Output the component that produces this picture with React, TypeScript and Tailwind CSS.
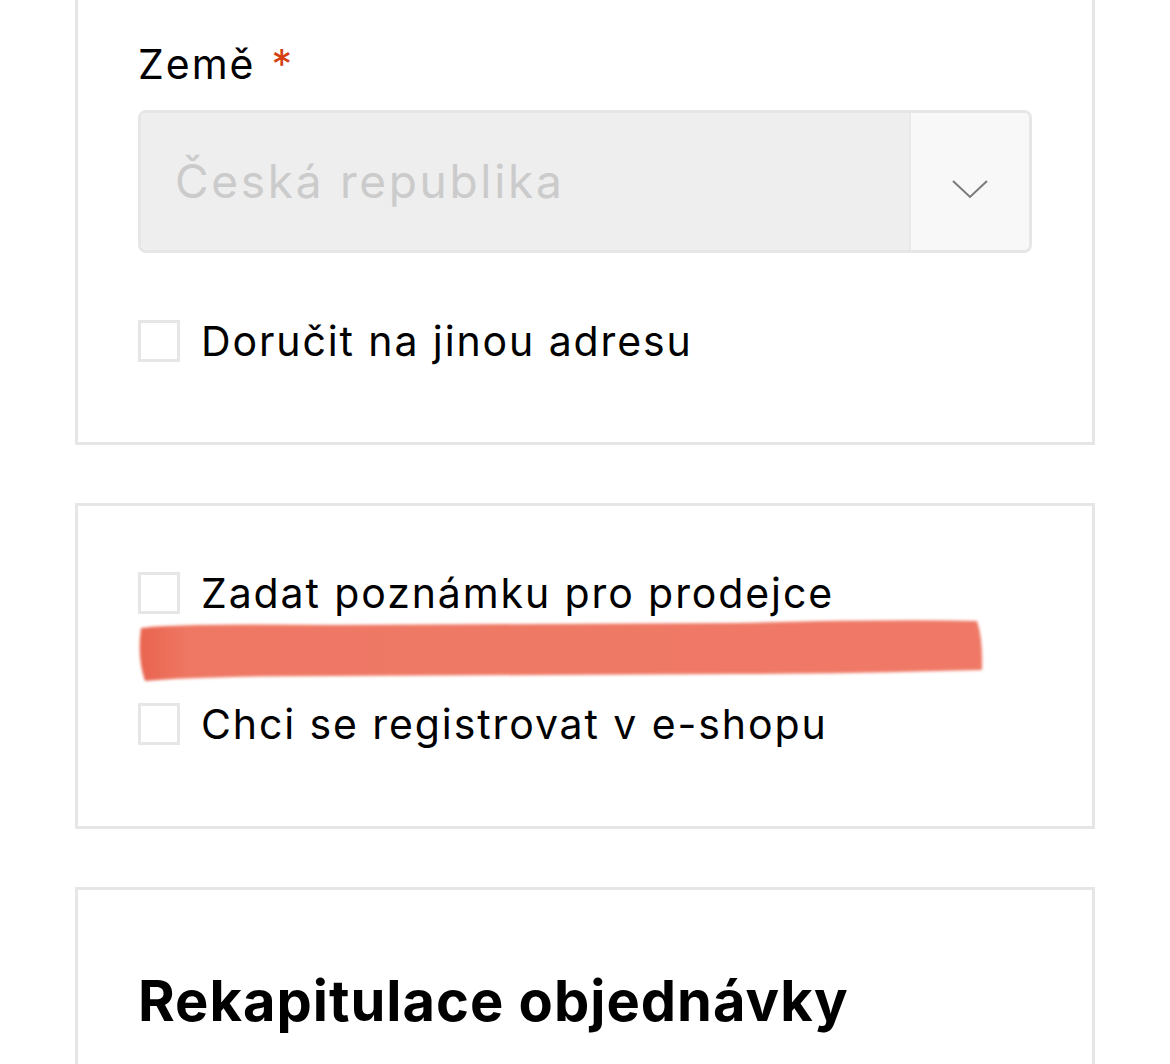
import React from "react";

function Checkbox({ label }: { label: string }) {
  return (
    <label className="flex h-[42px] items-center gap-[21px]">
      <span className="h-[42px] w-[42px] shrink-0 border-[3px] border-[#e6e6e6] bg-white" />
      <span className="text-[41px] leading-none tracking-[1.9px] text-black">{label}</span>
    </label>
  );
}

function Marker() {
  return (
    <svg width="852" height="66" viewBox="0 0 852 66" className="block">
      <defs>
        <linearGradient id="mk" x1="0" x2="1" y1="0" y2="0">
          <stop offset="0" stopColor="#e9644f" />
          <stop offset="0.06" stopColor="#ee7864" />
          <stop offset="1" stopColor="#ef7966" />
        </linearGradient>
        <filter id="soft" x="-2%" y="-20%" width="104%" height="140%">
          <feGaussianBlur stdDeviation="1.6" />
        </filter>
      </defs>
      <path
        d="M6 10 Q40 5 200 7 L600 5 Q760 1 842 3 Q848 20 847 52 Q700 56 600 56 L200 58 Q60 58 10 63 Q2 40 6 10 Z"
        fill="url(#mk)"
        filter="url(#soft)"
      />
    </svg>
  );
}

export default function App() {
  return (
    <div
      className="min-h-[1064px] bg-white px-[75px]"
      style={{ fontFamily: "Inter, 'Noto Sans', sans-serif" }}
    >
      <section className="border-[3px] border-t-0 border-[#e6e6e6] px-[60px] pb-[80px] pt-[36px]">
        <div className="flex h-[56px] items-center text-[41px] leading-none tracking-[2px] text-black">
          Země <span className="ml-[16px] text-[#d4400f]">*</span>
        </div>
        <div className="mt-[18px] flex h-[143px] overflow-hidden rounded-lg border-[3px] border-[#e6e6e6]">
          <div className="flex flex-1 items-center bg-[#eeeeee] pl-[34px] text-[46px] tracking-[2.7px] text-[#cbcbcb]">
            Česká republika
          </div>
          <div className="flex w-[120px] items-center justify-center border-l-2 border-[#e9e9e9] bg-[#f8f8f8]">
            <svg width="38" height="20" viewBox="0 0 38 20" className="mt-[14px]">
              <polyline points="2,2 19,18 36,2" fill="none" stroke="#7a7a7a" strokeWidth="2" />
            </svg>
          </div>
        </div>
        <div className="mt-[67px]">
          <Checkbox label="Doručit na jinou adresu" />
        </div>
      </section>

      <section className="mt-[58px] border-[3px] border-[#e6e6e6] px-[60px] pb-[81px] pt-[66px]">
        <Checkbox label="Zadat poznámku pro prodejce" />
        <div className="mt-[4px] -ml-[3px]">
          <Marker />
        </div>
        <div className="mt-[19px]">
          <Checkbox label="Chci se registrovat v e-shopu" />
        </div>
      </section>

      <section className="mt-[58px] border-[3px] border-b-0 border-[#e6e6e6] px-[60px] pb-[40px] pt-[79px]">
        <h2 className="text-[56px] font-bold leading-[64px] tracking-[1px] text-black">Rekapitulace objednávky</h2>
      </section>
    </div>
  );
}
